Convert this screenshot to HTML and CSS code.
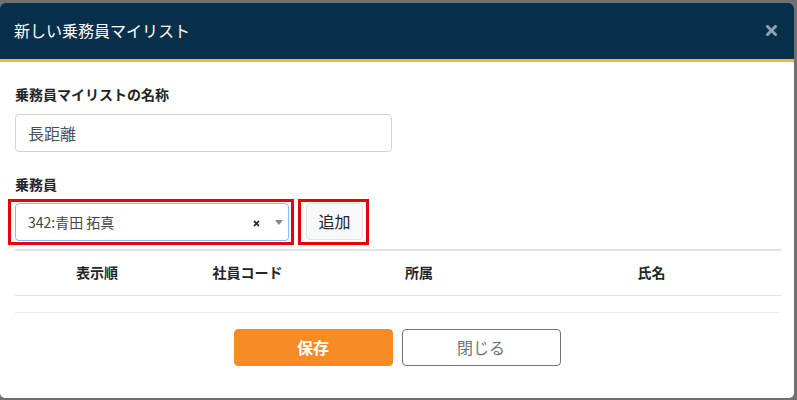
FILE: index.html
```html
<!DOCTYPE html>
<html lang="ja">
<head>
<meta charset="utf-8">
<title>新しい乗務員マイリスト</title>
<link rel="stylesheet" href="styles.css">
</head>
<body>
<div class="modal">
  <div class="modal-header">
    <h1 class="modal-title">新しい乗務員マイリスト</h1>
    <span class="close" aria-label="閉じる">
      <svg width="11" height="11" viewBox="0 0 11 11"><path d="M1.5 1.5 L9.5 9.5 M9.5 1.5 L1.5 9.5" stroke="#8ea3b3" stroke-width="3" stroke-linecap="square"/></svg>
    </span>
  </div>
  <div class="modal-body">
    <div class="form-group">
      <label class="label">乗務員マイリストの名称</label>
      <div class="input">長距離</div>
    </div>
    <div class="form-group crew">
      <label class="label">乗務員</label>
      <div class="select-row">
        <div class="select">
          <span class="select-value">342:青田 拓真</span>
          <span class="select-clear"><svg width="7" height="7" viewBox="0 0 7 7"><path d="M1 1 L6 6 M6 1 L1 6" stroke="#333" stroke-width="1.8"/></svg></span>
          <span class="select-arrow"></span>
        </div>
        <button class="btn-add">追加</button>
        <span class="mark mark-select"></span>
        <span class="mark mark-add"></span>
      </div>
    </div>
    <table class="table">
      <thead>
        <tr>
          <th class="c1">表示順</th>
          <th class="c2">社員コード</th>
          <th class="c3">所属</th>
          <th class="c4">氏名</th>
        </tr>
      </thead>
    </table>
  </div>
  <div class="modal-footer">
    <button class="btn btn-save">保存</button>
    <button class="btn btn-close">閉じる</button>
  </div>
</div>
</body>
</html>
```
FILE: styles.css
```css
* { box-sizing: border-box; }
html, body { margin: 0; padding: 0; }
body {
  width: 797px;
  height: 400px;
  overflow: hidden;
  background: #707070;
  font-family: "Noto Sans CJK JP", "Noto Sans", sans-serif;
  color: #212529;
  padding-top: 3px;
}
.modal {
  width: 794px;
  height: 395px;
  background: #fff;
  border-radius: 5px;
  overflow: hidden;
}
.modal-header {
  height: 59px;
  background: #08304a;
  border-bottom: 3px solid #f7b731;
  display: flex;
  align-items: center;
  justify-content: space-between;
  padding: 0 15px 0 14px;
}
.modal-title {
  margin: 0;
  font-size: 16px;
  font-weight: 400;
  color: #fff;
  line-height: 24px;
  position: relative;
  top: -1px;
}
.close {
  display: flex;
  width: 11px;
  height: 11px;
  margin-right: 2px;
  position: relative;
  top: -1px;
}
.modal-body {
  padding: 22px 15px 0 15px;
}
.form-group { display: flex; flex-direction: column; }
.label {
  font-size: 14px;
  font-weight: 700;
  line-height: 21px;
  height: 21px;
  color: #212529;
}
.input {
  margin-top: 9px;
  width: 377px;
  height: 38px;
  border: 1px solid #ced4da;
  border-radius: 4px;
  padding: 0 12px;
  font-size: 16px;
  line-height: 36px;
  color: #495057;
}
.crew { margin-top: 22px; }
.select-row {
  position: relative;
  margin-top: 8px;
  display: flex;
  align-items: flex-start;
  gap: 17px;
}
.select {
  width: 274px;
  height: 38px;
  border: 1px solid #80bdff;
  border-radius: 4px;
  display: flex;
  align-items: center;
  padding: 0 0 0 12px;
  font-size: 14px;
  color: #444;
}
.select-value { flex: 1; line-height: 20px; }
.select-clear {
  display: flex;
  margin-right: 15px;
  position: relative;
  top: 1px;
}
.select-arrow {
  width: 0;
  height: 0;
  border-left: 4px solid transparent;
  border-right: 4px solid transparent;
  border-top: 5px solid #888;
  margin-right: 5px;
}
.btn-add {
  width: 57px;
  height: 37px;
  border: 1px solid #dee2e6;
  border-radius: 4px;
  background: #f8f9fa;
  font-family: inherit;
  font-size: 16px;
  color: #212529;
  padding: 0;
  line-height: 35px;
}
.mark {
  position: absolute;
  border: 3px solid #e8000b;
  pointer-events: none;
}
.mark-select { left: -7px; top: -4px; width: 286px; height: 46px; }
.mark-add { left: 283px; top: -4px; width: 71px; height: 46px; }
.table {
  margin-top: 8px;
  width: 766px;
  border-collapse: collapse;
  table-layout: fixed;
}
.table th {
  border-top: 2px solid #dee2e6;
  border-bottom: 1px solid #dee2e6;
  height: 45px;
  padding: 0;
  font-size: 14px;
  font-weight: 700;
  text-align: center;
  vertical-align: middle;
  line-height: 21px;
}
.c1 { width: 164px; }
.c2 { width: 137px; }
.c3 { width: 206px; }
.c4 { width: 259px; }
.modal-footer {
  margin: 16px 15px 0 15px;
  border-top: 1px solid #e9ecef;
  padding-top: 16px;
  display: flex;
  justify-content: center;
  gap: 9px;
}
.btn {
  width: 159px;
  height: 37px;
  border-radius: 4px;
  font-family: inherit;
  font-size: 16px;
  padding: 0;
  line-height: 35px;
}
.btn-save {
  background: #f78b25;
  border: 1px solid #f78b25;
  color: #fff;
  font-weight: 700;
}
.btn-close {
  background: #fff;
  border: 1px solid #6c757d;
  color: #6c757d;
}
```
